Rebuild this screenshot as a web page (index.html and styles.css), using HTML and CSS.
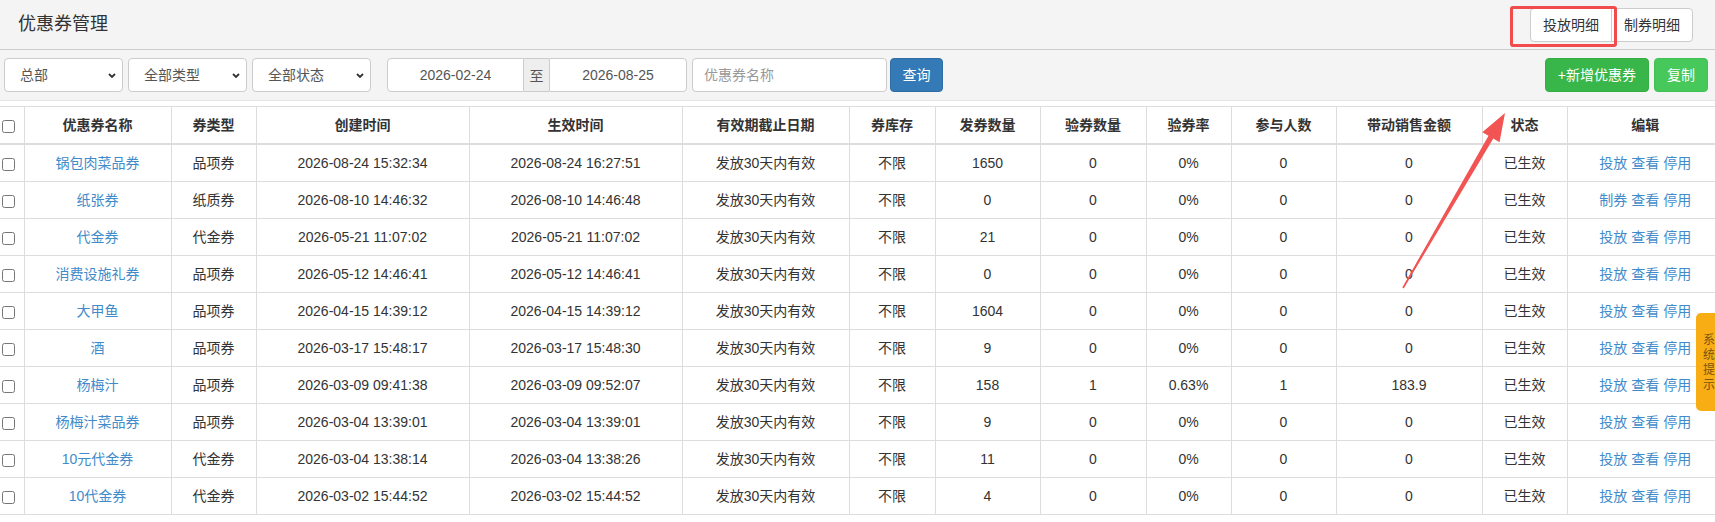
FILE: index.html
```html
<!DOCTYPE html>
<html lang="zh-CN">
<head>
  <meta charset="UTF-8" />
  <title>优惠券管理</title>
  <link rel="stylesheet" href="styles.css">
</head>
<body>

  <!-- page header -->
  <div class="page-header">
    <h1 class="page-title">优惠券管理</h1>
    <div class="btn-group">
      <button class="btn btn-default">投放明细</button>
      <button class="btn btn-default">制券明细</button>
    </div>
    <div class="mark-box"></div>
  </div>

  <!-- search bar -->
  <div class="toolbar">
    <div class="filters">
      <span class="select-wrap">
        <select class="form-control"><option>总部</option></select>
        <svg class="chevron" width="8" height="5" viewBox="0 0 8 5"><path d="M1 1 L4 4 L7 1" /></svg>
      </span>
      <span class="select-wrap">
        <select class="form-control"><option>全部类型</option></select>
        <svg class="chevron" width="8" height="5" viewBox="0 0 8 5"><path d="M1 1 L4 4 L7 1" /></svg>
      </span>
      <span class="select-wrap">
        <select class="form-control"><option>全部状态</option></select>
        <svg class="chevron" width="8" height="5" viewBox="0 0 8 5"><path d="M1 1 L4 4 L7 1" /></svg>
      </span>
      <div class="date-range">
        <input class="form-control date-start" value="2026-02-24" />
        <span class="addon">至</span>
        <input class="form-control date-end" value="2026-08-25" />
      </div>
      <input class="form-control name-input" placeholder="优惠券名称" />
      <button class="btn btn-primary">查询</button>
    </div>
    <div class="actions">
      <button class="btn btn-success">+新增优惠券</button>
      <button class="btn btn-copy">复制</button>
    </div>
  </div>

  <!-- coupon list -->
  <div class="content">
    <table class="table">
      <colgroup>
        <col class="c-check"><col class="c-name"><col class="c-type"><col class="c-time">
        <col class="c-time"><col class="c-deadline"><col class="c-stock"><col class="c-num">
        <col class="c-num2"><col class="c-rate"><col class="c-num"><col class="c-amount">
        <col class="c-rate"><col class="c-edit">
      </colgroup>
      <thead>
        <tr>
          <th><input type="checkbox" /></th>
          <th>优惠券名称</th>
          <th>券类型</th>
          <th>创建时间</th>
          <th>生效时间</th>
          <th>有效期截止日期</th>
          <th>券库存</th>
          <th>发券数量</th>
          <th>验券数量</th>
          <th>验券率</th>
          <th>参与人数</th>
          <th>带动销售金额</th>
          <th>状态</th>
          <th>编辑</th>
        </tr>
      </thead>
      <tbody>
        <tr>
          <td><input type="checkbox" /></td>
          <td><a href="#">锅包肉菜品券</a></td>
          <td>品项券</td>
          <td>2026-08-24 15:32:34</td>
          <td>2026-08-24 16:27:51</td>
          <td>发放30天内有效</td>
          <td>不限</td>
          <td>1650</td>
          <td>0</td>
          <td>0%</td>
          <td>0</td>
          <td>0</td>
          <td>已生效</td>
          <td><a href="#">投放</a> <a href="#">查看</a> <a href="#">停用</a></td>
        </tr>
        <tr>
          <td><input type="checkbox" /></td>
          <td><a href="#">纸张券</a></td>
          <td>纸质券</td>
          <td>2026-08-10 14:46:32</td>
          <td>2026-08-10 14:46:48</td>
          <td>发放30天内有效</td>
          <td>不限</td>
          <td>0</td>
          <td>0</td>
          <td>0%</td>
          <td>0</td>
          <td>0</td>
          <td>已生效</td>
          <td><a href="#">制券</a> <a href="#">查看</a> <a href="#">停用</a></td>
        </tr>
        <tr>
          <td><input type="checkbox" /></td>
          <td><a href="#">代金券</a></td>
          <td>代金券</td>
          <td>2026-05-21 11:07:02</td>
          <td>2026-05-21 11:07:02</td>
          <td>发放30天内有效</td>
          <td>不限</td>
          <td>21</td>
          <td>0</td>
          <td>0%</td>
          <td>0</td>
          <td>0</td>
          <td>已生效</td>
          <td><a href="#">投放</a> <a href="#">查看</a> <a href="#">停用</a></td>
        </tr>
        <tr>
          <td><input type="checkbox" /></td>
          <td><a href="#">消费设施礼券</a></td>
          <td>品项券</td>
          <td>2026-05-12 14:46:41</td>
          <td>2026-05-12 14:46:41</td>
          <td>发放30天内有效</td>
          <td>不限</td>
          <td>0</td>
          <td>0</td>
          <td>0%</td>
          <td>0</td>
          <td>0</td>
          <td>已生效</td>
          <td><a href="#">投放</a> <a href="#">查看</a> <a href="#">停用</a></td>
        </tr>
        <tr>
          <td><input type="checkbox" /></td>
          <td><a href="#">大甲鱼</a></td>
          <td>品项券</td>
          <td>2026-04-15 14:39:12</td>
          <td>2026-04-15 14:39:12</td>
          <td>发放30天内有效</td>
          <td>不限</td>
          <td>1604</td>
          <td>0</td>
          <td>0%</td>
          <td>0</td>
          <td>0</td>
          <td>已生效</td>
          <td><a href="#">投放</a> <a href="#">查看</a> <a href="#">停用</a></td>
        </tr>
        <tr>
          <td><input type="checkbox" /></td>
          <td><a href="#">酒</a></td>
          <td>品项券</td>
          <td>2026-03-17 15:48:17</td>
          <td>2026-03-17 15:48:30</td>
          <td>发放30天内有效</td>
          <td>不限</td>
          <td>9</td>
          <td>0</td>
          <td>0%</td>
          <td>0</td>
          <td>0</td>
          <td>已生效</td>
          <td><a href="#">投放</a> <a href="#">查看</a> <a href="#">停用</a></td>
        </tr>
        <tr>
          <td><input type="checkbox" /></td>
          <td><a href="#">杨梅汁</a></td>
          <td>品项券</td>
          <td>2026-03-09 09:41:38</td>
          <td>2026-03-09 09:52:07</td>
          <td>发放30天内有效</td>
          <td>不限</td>
          <td>158</td>
          <td>1</td>
          <td>0.63%</td>
          <td>1</td>
          <td>183.9</td>
          <td>已生效</td>
          <td><a href="#">投放</a> <a href="#">查看</a> <a href="#">停用</a></td>
        </tr>
        <tr>
          <td><input type="checkbox" /></td>
          <td><a href="#">杨梅汁菜品券</a></td>
          <td>品项券</td>
          <td>2026-03-04 13:39:01</td>
          <td>2026-03-04 13:39:01</td>
          <td>发放30天内有效</td>
          <td>不限</td>
          <td>9</td>
          <td>0</td>
          <td>0%</td>
          <td>0</td>
          <td>0</td>
          <td>已生效</td>
          <td><a href="#">投放</a> <a href="#">查看</a> <a href="#">停用</a></td>
        </tr>
        <tr>
          <td><input type="checkbox" /></td>
          <td><a href="#">10元代金券</a></td>
          <td>代金券</td>
          <td>2026-03-04 13:38:14</td>
          <td>2026-03-04 13:38:26</td>
          <td>发放30天内有效</td>
          <td>不限</td>
          <td>11</td>
          <td>0</td>
          <td>0%</td>
          <td>0</td>
          <td>0</td>
          <td>已生效</td>
          <td><a href="#">投放</a> <a href="#">查看</a> <a href="#">停用</a></td>
        </tr>
        <tr>
          <td><input type="checkbox" /></td>
          <td><a href="#">10代金券</a></td>
          <td>代金券</td>
          <td>2026-03-02 15:44:52</td>
          <td>2026-03-02 15:44:52</td>
          <td>发放30天内有效</td>
          <td>不限</td>
          <td>4</td>
          <td>0</td>
          <td>0%</td>
          <td>0</td>
          <td>0</td>
          <td>已生效</td>
          <td><a href="#">投放</a> <a href="#">查看</a> <a href="#">停用</a></td>
        </tr>
      </tbody>
    </table>
  </div>

  <div class="sys-tip">系统提示</div>

  <!-- annotation arrow -->
  <svg class="mark-arrow" width="1715" height="522" viewBox="0 0 1715 522">
    <polygon points="1402.3,287.6 1488.5,135.8 1482.3,132.2 1505,113 1499.5,142.2 1493.3,138.6 1403.7,288.4" />
  </svg>

</body>
</html>
```

FILE: styles.css
```css
html, body {
  margin: 0;
  padding: 0;
  overflow-x: hidden;
}

body {
  position: relative;
  font-family: "Liberation Sans", "Noto Sans CJK SC", sans-serif;
  font-size: 14px;
  color: #333;
  background: #fff;
}

a {
  color: #428bca;
  text-decoration: none;
}

/* header */
.page-header {
  position: relative;
  display: flex;
  align-items: center;
  justify-content: space-between;
  height: 49px;
  padding: 0 22px 0 18px;
  background: #f4f4f4;
  border-bottom: 1px solid #ccc;
}

.page-title {
  margin: -2px 0 0;
  font-size: 18px;
  font-weight: normal;
  line-height: 22px;
}

.btn {
  height: 34px;
  padding: 6px 12px;
  font-family: inherit;
  font-size: 14px;
  line-height: 20px;
  border: 1px solid transparent;
  border-radius: 4px;
  cursor: pointer;
  white-space: nowrap;
}

.btn-default {
  background: #fff;
  border-color: #ccc;
  color: #333;
}

.btn-group {
  display: flex;
}

.btn-group .btn:first-child {
  border-top-right-radius: 0;
  border-bottom-right-radius: 0;
}

.btn-group .btn + .btn {
  margin-left: -1px;
  border-top-left-radius: 0;
  border-bottom-left-radius: 0;
}

.mark-box {
  position: absolute;
  top: 6px;
  right: 98px;
  width: 107px;
  height: 41px;
  box-sizing: border-box;
  border: 3px solid #f24b4b;
  border-radius: 3px;
  pointer-events: none;
}

/* toolbar */
.toolbar {
  display: flex;
  align-items: center;
  justify-content: space-between;
  padding: 8px 7px 8px 4px;
  background: #f4f4f4;
  border-bottom: 1px solid #e6e6e6;
}

.filters {
  display: flex;
  align-items: center;
}

.form-control {
  height: 34px;
  box-sizing: border-box;
  padding: 6px 12px;
  font-family: inherit;
  font-size: 14px;
  color: #555;
  background: #fff;
  border: 1px solid #ccc;
  border-radius: 4px;
  outline: none;
}

.form-control::placeholder {
  color: #999;
}

.select-wrap {
  position: relative;
  display: block;
  margin-right: 5px;
}

.select-wrap select {
  width: 119px;
  padding-left: 15px;
  -webkit-appearance: none;
  appearance: none;
}

.select-wrap .chevron {
  position: absolute;
  right: 7px;
  top: 15px;
  pointer-events: none;
}

.chevron path {
  fill: none;
  stroke: #333;
  stroke-width: 1.8;
}

.date-range {
  display: flex;
  margin-left: 11px;
}

.date-start,
.date-end {
  width: 137px;
  text-align: center;
}

.date-start {
  border-radius: 4px 0 0 4px;
}

.date-end {
  width: 138px;
  border-radius: 0 4px 4px 0;
}

.addon {
  width: 25px;
  height: 34px;
  box-sizing: border-box;
  display: flex;
  align-items: center;
  justify-content: center;
  background: #eee;
  border-top: 1px solid #ccc;
  border-bottom: 1px solid #ccc;
  color: #555;
}

.name-input {
  width: 195px;
  margin-left: 5px;
  padding-left: 11px;
}

.btn-primary {
  width: 53px;
  margin-left: 3px;
  padding: 6px 0;
  color: #fff;
  background: #337ab7;
  border-color: #2e6da4;
}

.actions {
  display: flex;
  gap: 5px;
}

.btn-success {
  color: #fff;
  background: #39b64a;
  border-color: #34ad44;
}

.btn-copy {
  color: #fff;
  background: #47c85a;
  border-color: #42c055;
}

/* table */
.content {
  padding-top: 5px;
  overflow: hidden;
}

.table {
  width: 1723px;
  table-layout: fixed;
  border-collapse: collapse;
  border-top: 1px solid #ddd;
  border-bottom: 1px solid #ddd;
}

.c-check { width: 24px; }
.c-name { width: 147px; }
.c-type { width: 85px; }
.c-time { width: 213px; }
.c-deadline { width: 167px; }
.c-stock { width: 86px; }
.c-num { width: 105px; }
.c-num2 { width: 106px; }
.c-rate { width: 85px; }
.c-amount { width: 146px; }
.c-edit { width: 156px; }

.table th,
.table td {
  padding: 8px 0;
  line-height: 20px;
  text-align: center;
  white-space: nowrap;
  border-left: 1px solid #ddd;
}

.table th {
  font-weight: bold;
  border-bottom: 2px solid #ddd;
}

.table td {
  border-top: 1px solid #ddd;
}

.table th:first-child,
.table td:first-child {
  border-left: none;
  text-align: left;
}

.table input[type="checkbox"] {
  margin: 0 0 0 2px;
  width: 13px;
  height: 13px;
  vertical-align: middle;
}

/* floating tip */
.sys-tip {
  position: fixed;
  top: 313px;
  right: -8px;
  width: 12px;
  padding: 20px 8px 18px 7px;
  font-size: 12px;
  line-height: 15px;
  color: #7a5410;
  background: #f9ad14;
  border-radius: 5px 0 0 5px;
}

.mark-arrow {
  position: absolute;
  top: 0;
  left: 0;
  pointer-events: none;
}

.mark-arrow polygon {
  fill: #f25454;
}
```
